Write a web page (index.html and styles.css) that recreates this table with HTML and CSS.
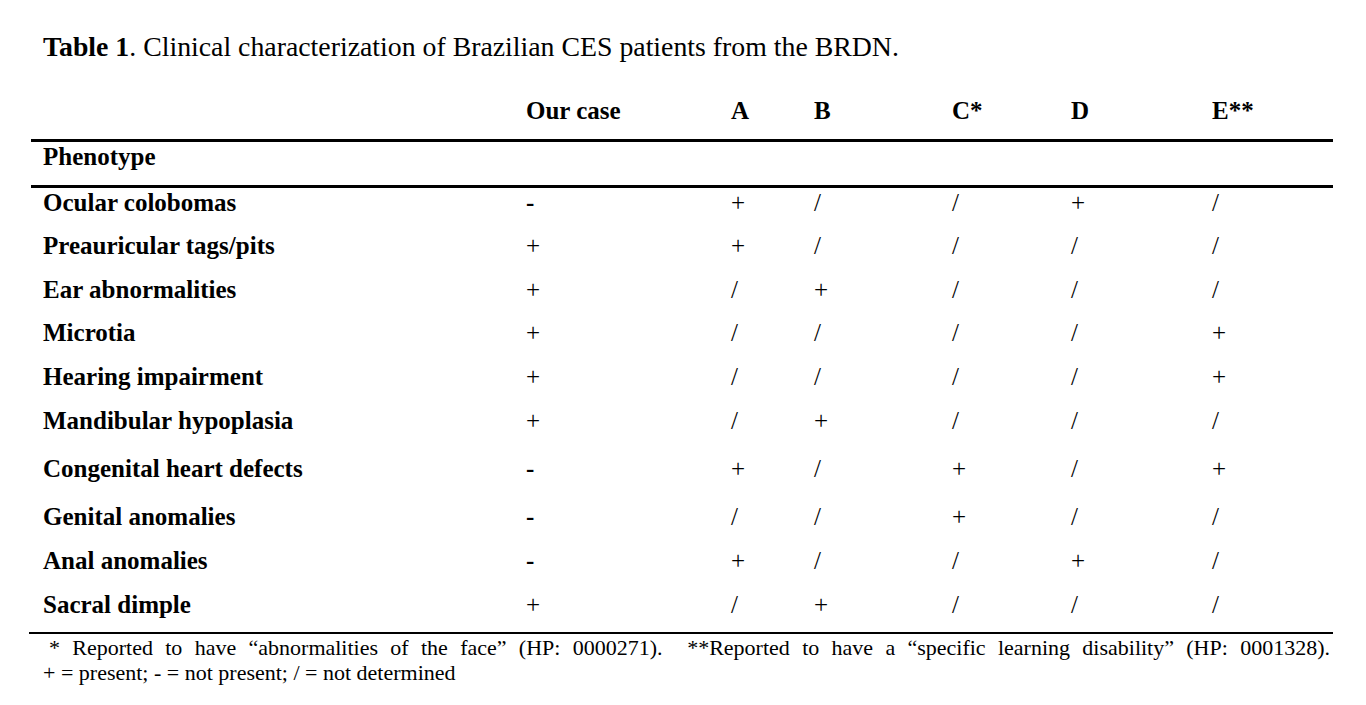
FILE: index.html
```html
<!DOCTYPE html>
<html>
<head>
<meta charset="utf-8">
<link rel="stylesheet" href="styles.css">
</head>
<body>
<div class="page">
  <div class="title"><b>Table 1</b>. Clinical characterization of Brazilian CES patients from the BRDN.</div>
  <div class="table">
    <div class="row head">
      <div class="c c1"></div><div class="c c2">Our case</div><div class="c c3">A</div><div class="c c4">B</div><div class="c c5">C*</div><div class="c c6">D</div><div class="c c7">E**</div>
    </div>
    <div class="row pheno">
      <div class="c c1 lab">Phenotype</div>
    </div>
    <div class="row r43 first">
      <div class="c c1 lab">Ocular colobomas</div><div class="c c2"><b>-</b></div><div class="c c3">+</div><div class="c c4">/</div><div class="c c5">/</div><div class="c c6">+</div><div class="c c7">/</div>
    </div>
    <div class="row r44">
      <div class="c c1 lab">Preauricular tags/pits</div><div class="c c2">+</div><div class="c c3">+</div><div class="c c4">/</div><div class="c c5">/</div><div class="c c6">/</div><div class="c c7">/</div>
    </div>
    <div class="row r43">
      <div class="c c1 lab">Ear abnormalities</div><div class="c c2">+</div><div class="c c3">/</div><div class="c c4">+</div><div class="c c5">/</div><div class="c c6">/</div><div class="c c7">/</div>
    </div>
    <div class="row r44">
      <div class="c c1 lab">Microtia</div><div class="c c2">+</div><div class="c c3">/</div><div class="c c4">/</div><div class="c c5">/</div><div class="c c6">/</div><div class="c c7">+</div>
    </div>
    <div class="row r44">
      <div class="c c1 lab">Hearing impairment</div><div class="c c2">+</div><div class="c c3">/</div><div class="c c4">/</div><div class="c c5">/</div><div class="c c6">/</div><div class="c c7">+</div>
    </div>
    <div class="row r48">
      <div class="c c1 lab">Mandibular hypoplasia</div><div class="c c2">+</div><div class="c c3">/</div><div class="c c4">+</div><div class="c c5">/</div><div class="c c6">/</div><div class="c c7">/</div>
    </div>
    <div class="row r48">
      <div class="c c1 lab">Congenital heart defects</div><div class="c c2"><b>-</b></div><div class="c c3">+</div><div class="c c4">/</div><div class="c c5">+</div><div class="c c6">/</div><div class="c c7">+</div>
    </div>
    <div class="row r44">
      <div class="c c1 lab">Genital anomalies</div><div class="c c2"><b>-</b></div><div class="c c3">/</div><div class="c c4">/</div><div class="c c5">+</div><div class="c c6">/</div><div class="c c7">/</div>
    </div>
    <div class="row r44">
      <div class="c c1 lab">Anal anomalies</div><div class="c c2"><b>-</b></div><div class="c c3">+</div><div class="c c4">/</div><div class="c c5">/</div><div class="c c6">+</div><div class="c c7">/</div>
    </div>
    <div class="row r42 last">
      <div class="c c1 lab">Sacral dimple</div><div class="c c2">+</div><div class="c c3">/</div><div class="c c4">+</div><div class="c c5">/</div><div class="c c6">/</div><div class="c c7">/</div>
    </div>
  </div>
  <div class="notes">
    <div class="note1">* Reported to have “abnormalities of the face” (HP: 0000271).&nbsp; **Reported to have a “specific learning disability” (HP: 0001328).</div>
    <div class="note2">+ = present; - = not present; / = not determined</div>
  </div>
</div>
</body>
</html>
```

FILE: styles.css
```css
html, body {
  margin: 0;
  padding: 0;
  background: #ffffff;
}
body {
  font-family: "Liberation Serif", "Times New Roman", serif;
  color: #000000;
}
.page {
  width: 1366px;
  height: 705px;
  overflow: hidden;
}
.title {
  margin-top: 32px;
  margin-left: 43px;
  font-size: 27.8px;
  line-height: 30px;
  height: 30px;
  white-space: nowrap;
}
.table {
  margin-left: 31px;
  width: 1302px;
}
.row {
  display: flex;
  line-height: 30px;
  font-size: 25px;
  box-sizing: border-box;
}
.c {
  box-sizing: border-box;
  padding-left: 12px;
  white-space: nowrap;
}
.c1 { width: 483px; }
.c2 { width: 205px; }
.c3 { width: 83px; }
.c4 { width: 138px; }
.c5 { width: 119px; }
.c6 { width: 141px; }
.c7 { width: 133px; }
.head {
  height: 77px;
  padding-top: 34px;
  font-weight: bold;
}
.lab {
  font-weight: bold;
}
.pheno {
  height: 46px;
  border-top: 3px solid #000;
}
.first {
  border-top: 3px solid #000;
}
.r42 { height: 42px; }
.r43 { height: 43px; }
.r44 { height: 44px; }
.r48 { height: 48px; }
.first.r43 { height: 46px; }
.notes {
  margin-left: 29px;
  width: 1304px;
  border-top: 2px solid #000;
  padding-left: 14px;
  padding-right: 3px;
  box-sizing: border-box;
  font-size: 22px;
  line-height: 25px;
  padding-top: 1px;
}
.note1 {
  padding-left: 6px;
  text-align: justify;
  text-align-last: justify;
}
```
